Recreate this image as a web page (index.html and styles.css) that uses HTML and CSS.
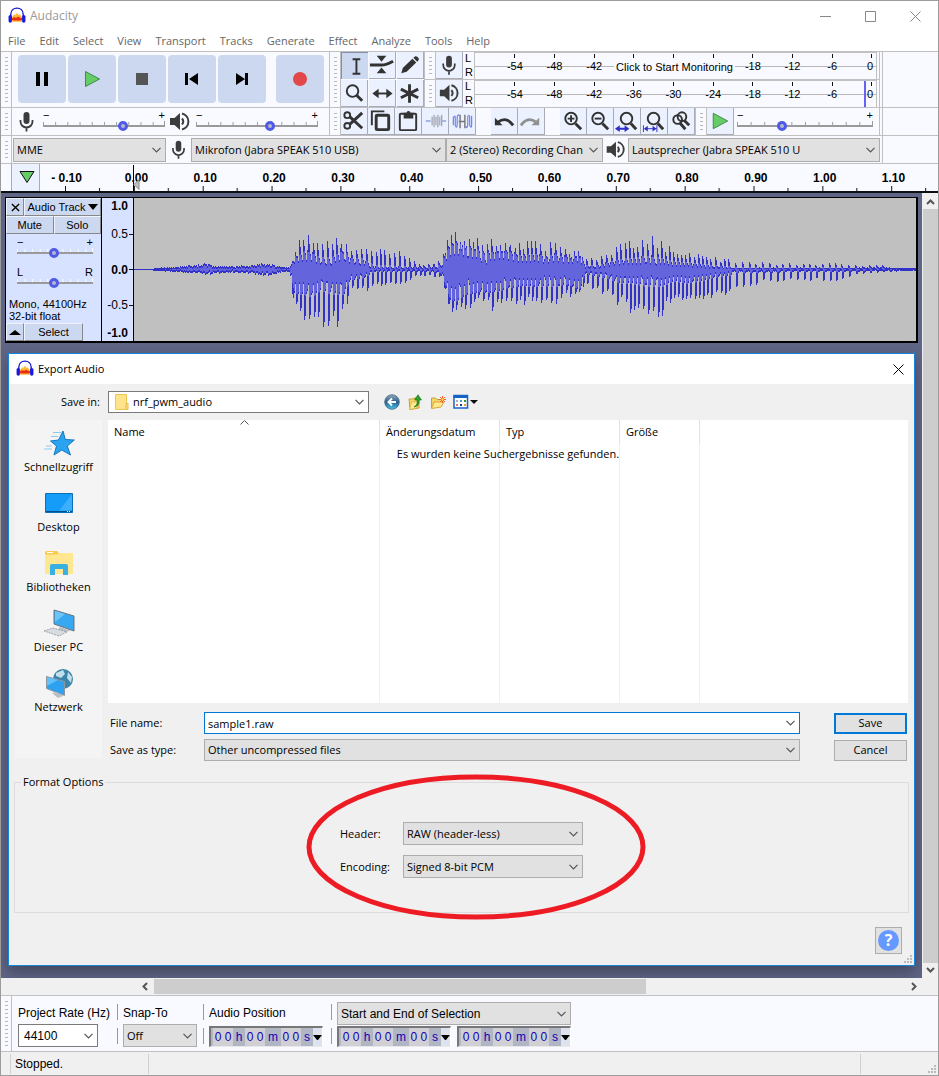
FILE: index.html
```html
<!DOCTYPE html>
<html lang="en">
<head>
<meta charset="utf-8">
<title>Audacity</title>
<link rel="stylesheet" href="styles.css">
</head>
<body>
<svg class="symbols" aria-hidden="true">
  <symbol id="logo" viewBox="0 0 16 16"><path d="M2.500 8.500V6.500C2.500 3 5 1 8 1s5.500 2 5.500 5.500v2" fill="none" stroke="#1414c8" stroke-width="1.200"/><path d="M3.500 9l2-2.500 1 .5 1.500-2 1.500 2 1-.5 2 2.500v4h-9z" fill="#ffb838"/><path d="M3.500 10l2-1 2 .5 1.500-1 1.500 1 2 .5v1.500l-2 .5h-5l-2-.5z" fill="#e83010"/><rect x=".5" y="7" width="3" height="7" rx="1.500" fill="#1818e0"/><rect x="12.500" y="7" width="3" height="7" rx="1.500" fill="#1818e0"/></symbol>
  <symbol id="mic" viewBox="0 0 27 27"><rect x="10.500" y="4" width="6" height="12" rx="3" fill="#3c3c3c"/><path d="M7.500 12v1.500a6 6 0 0 0 12 0V12M13.500 19.500v4" fill="none" stroke="#3c3c3c" stroke-width="1.800"/></symbol>
  <symbol id="speaker" viewBox="0 0 27 27"><path d="M4 10h4.500l5.500-5v17l-5.500-5H4z" fill="#3c3c3c"/><path d="M16 10.500q2.500 3 0 6M16 5.500a8.200 8.200 0 0 1 0 16" fill="none" stroke="#3c3c3c" stroke-width="2"/></symbol>
  <symbol id="play" viewBox="0 0 27 27"><path d="M6.500 5.500v16l15-8z" fill="#66cc66" stroke="#3c8c46"/></symbol>
</svg>
<div class="window">
  <header class="titlebar">
    <svg class="logo"><use href="#logo"/></svg><span>Audacity</span>
    <div class="winbuttons">
      <button aria-label="Minimize"><svg viewBox="0 0 11 11"><path d="M0 5.500h11"/></svg></button>
      <button aria-label="Maximize"><svg viewBox="0 0 11 11"><path d="M.5.5h10v10H.5z"/></svg></button>
      <button aria-label="Close"><svg viewBox="0 0 11 11"><path d="M.5.5l10 10M10.500.5l-10 10"/></svg></button>
    </div>
  </header>
  <nav class="menubar">
    <a href="#">File</a><a href="#">Edit</a><a href="#">Select</a><a href="#">View</a><a href="#">Transport</a><a href="#">Tracks</a><a href="#">Generate</a><a href="#">Effect</a><a href="#">Analyze</a><a href="#">Tools</a><a href="#">Help</a>
  </nav>

  <div class="toolbars">
    <div class="bar">
      <i class="grip"></i>
      <div class="transport">
        <button aria-label="Pause"><svg viewBox="0 0 48 48"><path d="M18 17h4v14h-4zM26 17h4v14h-4z"/></svg></button>
        <button aria-label="Play"><svg viewBox="0 0 48 48"><path d="M17.500 16.500v15l14-7.500z" fill="#66cc66" stroke="#3c8c46"/></svg></button>
        <button aria-label="Stop"><svg viewBox="0 0 48 48"><path d="M18 18h12v12H18z" fill="#555"/></svg></button>
        <button aria-label="Skip to Start"><svg viewBox="0 0 48 48"><path d="M17 18h3v12h-3zM30 18v12l-9-6z"/></svg></button>
        <button aria-label="Skip to End"><svg viewBox="0 0 48 48"><path d="M27 18h3v12h-3zM18 18v12l9-6z"/></svg></button>
        <button class="record" aria-label="Record"><svg viewBox="0 0 48 48"><circle cx="24" cy="24" r="7" fill="#e24848"/></svg></button>
      </div>
      <i class="grip"></i>
      <div class="tools">
        <button class="tool on" aria-label="Selection"><svg viewBox="0 0 27 27"><path class="s" d="M11 6.500h8M11 21.500h8M15 7v14"/></svg></button>
        <button class="tool" aria-label="Envelope"><svg viewBox="0 0 27 27"><path d="M8 4h10l-5 6zM8 22h10l-5-6z"/><path class="t" d="M1 13.500h12q5 0 12-4"/></svg></button>
        <button class="tool" aria-label="Draw"><svg viewBox="0 0 27 27"><path d="M4.500 22l1.500-5.500L16 7l4 4-10 9.500zM17 6l2-1.500q1-.5 2 .5l1.500 1.500q.5 1-.2 2L21 10z"/></svg></button>
        <button class="tool" aria-label="Zoom"><svg viewBox="0 0 27 27"><circle class="s" cx="12" cy="11.500" r="6"/><path class="t" d="M16 15.500l6 6"/></svg></button>
        <button class="tool" aria-label="Time Shift"><svg viewBox="0 0 27 27"><path class="s" d="M7 14h14"/><path d="M3.500 14l6.500-5v10zM24.500 14l-6.500-5v10z"/></svg></button>
        <button class="tool" aria-label="Multi-Tool"><svg viewBox="0 0 27 27"><path class="t" d="M13 4.500v19M4 9.500l18 9M22 9.500L4 18.500"/></svg></button>
      </div>
      <div class="meters">
        <div class="meter">
          <i class="grip"></i><button class="tool" aria-label="Record Meter"><svg><use href="#mic"/></svg></button>
          <div class="channels"><span>L</span><span>R</span></div>
          <div class="scale"><span>-54</span><span>-48</span><span>-42</span><span></span><span></span><span></span><span>-18</span><span>-12</span><span>-6</span><span class="zero">0</span><button class="monitor">Click to Start Monitoring</button></div>
        </div>
        <div class="meter">
          <i class="grip"></i><button class="tool" aria-label="Playback Meter"><svg><use href="#speaker"/></svg></button>
          <div class="channels"><span>L</span><span>R</span></div>
          <div class="scale"><span>-54</span><span>-48</span><span>-42</span><span>-36</span><span>-30</span><span>-24</span><span>-18</span><span>-12</span><span>-6</span><span class="zero">0</span><i class="peak"></i></div>
        </div>
      </div>
    </div>

    <div class="bar">
      <i class="grip"></i>
      <div class="mixer">
        <svg class="glyph"><use href="#mic"/></svg>
        <label class="slider"><span>−</span><span>+</span><input type="range" aria-label="Recording Volume" value="67"></label>
        <svg class="glyph"><use href="#speaker"/></svg>
        <label class="slider"><span>−</span><span>+</span><input type="range" aria-label="Playback Volume" value="62"></label>
      </div>
      <i class="grip"></i>
      <div class="edit">
        <div class="group">
          <button class="tool" aria-label="Cut"><svg viewBox="0 0 27 27"><circle class="s" cx="6.500" cy="7.500" r="3"/><circle class="s" cx="6.500" cy="18.500" r="3"/><path class="t" d="M9 9l13 12M9 17L22 5"/></svg></button>
          <button class="tool" aria-label="Copy"><svg viewBox="0 0 27 27"><path class="s" d="M4 18V3.500h13"/><rect class="t" x="8.500" y="7.500" width="13" height="15" rx="1"/></svg></button>
          <button class="tool" aria-label="Paste"><svg viewBox="0 0 27 27"><rect class="s" x="5" y="6" width="17" height="17" rx="1"/><path d="M9 5h3a2 2 0 0 1 4 0h3v6H9z"/></svg></button>
          <button class="tool" aria-label="Trim"><svg viewBox="0 0 27 27"><path d="M4 13.500h5M21 13.500h4" stroke="#a9b4e8" stroke-width="2"/><path d="M10.500 9v9M12.500 7v13M14.500 9v9M16.500 7v13M18.500 9v9M20.500 7v12" stroke="#9c9ca8" stroke-width="1.200"/></svg></button>
          <button class="tool" aria-label="Silence"><svg viewBox="0 0 27 27"><path d="M4.500 18V10q2-3 2 0v8q1.500 4 2 0V9q1-3 2-1M17.500 19q1 3 2-1V9q1-3 2 0v9q2 4 2 0V8" fill="none" stroke="#7080e8" stroke-width="1.200"/><path d="M10 14h7M11.500 7v14M16.500 7v14" stroke="#777" stroke-width="1.500"/></svg></button>
        </div>
        <div class="group">
          <button class="tool" aria-label="Undo"><svg viewBox="0 0 27 27"><path class="t" d="M7 15q9-7 16 3"/><path d="M4 10v8h8z"/></svg></button>
          <button class="tool off" aria-label="Redo"><svg viewBox="0 0 27 27"><path class="t" d="M19 15q-9-7-16 3"/><path d="M22 10v8h-8z"/></svg></button>
        </div>
        <div class="group">
          <button class="tool" aria-label="Zoom In"><svg viewBox="0 0 27 27"><circle class="s" cx="11.500" cy="11" r="6"/><path class="s" d="M8 11h7M11.500 7.500v7"/><path class="t" d="M16 16l6 6"/></svg></button>
          <button class="tool" aria-label="Zoom Out"><svg viewBox="0 0 27 27"><circle class="s" cx="11.500" cy="11" r="6"/><path class="s" d="M8 11h7"/><path class="t" d="M16 16l6 6"/></svg></button>
          <button class="tool" aria-label="Fit Selection"><svg viewBox="0 0 27 27"><circle class="s" cx="13" cy="11" r="6"/><path class="t" d="M17.500 16l5.500 6"/><path d="M1 21.500l5-3.500v2.500h5V18l5 3.500-5 3.500v-2.500H6V25z" fill="#3030c8"/></svg></button>
          <button class="tool" aria-label="Fit Project"><svg viewBox="0 0 27 27"><circle class="s" cx="13" cy="11" r="6"/><path class="t" d="M17.500 16l5.500 6"/><path d="M2.500 18v7M16.500 18v7M4 21.500h12" stroke="#3030c8"/><path d="M3 21.500l4-3v6zM16 21.500l-4-3v6z" fill="#3030c8"/></svg></button>
          <button class="tool" aria-label="Zoom Toggle"><svg viewBox="0 0 27 27"><circle class="s" cx="10" cy="12" r="4.500"/><circle class="s" cx="14.500" cy="9" r="4.500"/><path class="t" d="M12 15l6 7M17 13l5 5"/></svg></button>
        </div>
      </div>
      <i class="grip"></i>
      <div class="speed">
        <button class="tool" aria-label="Play at Speed"><svg><use href="#play"/></svg></button>
        <label class="slider"><span>−</span><span>+</span><input type="range" aria-label="Playback Speed" value="32"></label>
      </div>
    </div>

    <div class="bar devices">
      <i class="grip"></i>
      <select class="host" aria-label="Audio Host"><option>MME</option></select>
      <svg class="glyph"><use href="#mic"/></svg>
      <select class="input" aria-label="Recording Device"><option>Mikrofon (Jabra SPEAK 510 USB)</option></select>
      <select class="chans" aria-label="Recording Channels"><option>2 (Stereo) Recording Channels</option></select>
      <svg class="glyph"><use href="#speaker"/></svg>
      <select class="output" aria-label="Playback Device"><option>Lautsprecher (Jabra SPEAK 510 U</option></select>
    </div>

    <div class="timeline">
      <button class="pin" aria-label="Pin Play Head"><svg viewBox="0 0 26 26"><path d="M6 6.500h14l-7 11z" fill="#66cc66" stroke="#111"/></svg></button>
      <div class="ruler">
        <span class="neg">- 0.10</span><span>0.00</span><span>0.10</span><span>0.20</span><span>0.30</span><span>0.40</span><span>0.50</span><span>0.60</span><span>0.70</span><span>0.80</span><span>0.90</span><span>1.00</span><span>1.10</span>
        <svg class="ticks" aria-hidden="true"><defs><pattern id="tk" x="25" y="0" width="68.850" height="27" patternUnits="userSpaceOnUse"><path d="M.5 22v5M34.500 24v3" stroke="#111"/></pattern></defs><rect width="100%" height="27" fill="url(#tk)"/><path d="M93.500 1v26" stroke="#000"/><path d="M94 20.500l5-5v10z" fill="#c0c0c0" stroke="#888"/></svg>
      </div>
    </div>
  </div>

  <main class="workspace">
    <div class="canvas">
      <section class="track">
        <div class="panel">
          <div class="row"><button class="close" aria-label="Close Track"><svg viewBox="0 0 10 10"><path d="M1 1l8 8M9 1L1 9" stroke="#000" stroke-width="1.500"/></svg></button><button class="grow name">Audio Track<i class="down"></i></button></div>
          <div class="row"><button class="grow">Mute</button><button class="grow">Solo</button></div>
          <label class="slider"><span>−</span><span>+</span><input type="range" aria-label="Gain" value="48"></label>
          <label class="slider pan"><span>L</span><span>R</span><input type="range" aria-label="Pan" value="48"></label>
          <p>Mono, 44100Hz<br>32-bit float</p>
          <div class="row"><button class="close" aria-label="Collapse"><i class="up"></i></button><button class="select">Select</button></div>
        </div>
        <div class="vruler"><b>1.0</b><span>0.5</span><b class="axis">0.0</b><span>-0.5</span><b>-1.0</b></div>
        <svg class="wave" id="wave" viewBox="0 0 782 143" preserveAspectRatio="none" role="img" aria-label="Waveform"></svg>
      </section>

      <section class="dialog" role="dialog" aria-labelledby="dlg-title">
        <header class="dlg-title"><svg class="logo"><use href="#logo"/></svg><span id="dlg-title">Export Audio</span><button aria-label="Close dialog"><svg viewBox="0 0 11 11"><path d="M.5.5l10 10M10.500.5l-10 10" stroke="#000"/></svg></button></header>
        <div class="savein">
          <label for="folder">Save in:</label>
          <div class="folder">
            <select id="folder"><option>nrf_pwm_audio</option></select>
            <svg viewBox="0 0 14 16"><path d="M.5.5h11v15H.5z" fill="#ffe48c" stroke="#eec550"/><path d="M11 9.500h2v6h-2z" fill="#ffe48c" stroke="#e8bc48"/></svg>
          </div>
          <div class="navicons">
            <button aria-label="Back"><svg viewBox="0 0 16 16"><defs><linearGradient id="bk" x2="0" y2="1"><stop stop-color="#9ab"/><stop offset=".5" stop-color="#235f92"/><stop offset="1" stop-color="#48c8e8"/></linearGradient></defs><circle cx="8" cy="8" r="7.300" fill="url(#bk)" stroke="#48637c" stroke-width=".8"/><path d="M12 8H5M8 4.500L4.500 8 8 11.500" fill="none" stroke="#fff" stroke-width="2"/></svg></button>
            <button aria-label="Up One Level"><svg viewBox="0 0 16 16"><path d="M2 5h4l1-1h5v10l-9 1.500z" fill="#f4d468" stroke="#c9a030"/><path d="M2.500 15.500L4.500 8h7L10 14z" fill="#ffe890" stroke="#d4aa38" stroke-width=".6"/><path d="M7 13q4-2 3-7H7.500L11 .8 14.500 6H12q1 6-5 7z" fill="#2ca02c" stroke="#14701c" stroke-width=".6"/></svg></button>
            <button aria-label="New Folder"><svg viewBox="0 0 16 16"><path d="M1.500 14V4h4l1.500 1.500h5V9" fill="#f4d468" stroke="#c9a030"/><path d="M1.500 14.500L4 8h10l-3 5z" fill="#ffe890" stroke="#d4aa38"/><path d="M12.500 2v7M9 5.500h7M10 3l5 5M15 3l-5 5" stroke="#f06030"/><circle cx="12.500" cy="5.500" r="1.200" fill="#ffe040"/></svg></button>
            <button class="view" aria-label="View Menu"><svg viewBox="0 0 26 16"><path d="M1 1.500h13.500v12.500H1z" fill="#fff" stroke="#1464c8" stroke-width="1.500"/><path d="M.5 1h14.500v3H.5z" fill="#1464c8"/><path d="M3 6h2v2H3z" fill="#aac"/><path d="M7 6h2v2H7z" fill="#48a0d8"/><path d="M11 6h2v2h-2z" fill="#309040"/><path d="M3 10h2v2H3z" fill="#f07850"/><path d="M7 10h2v2H7z" fill="#203880"/><path d="M11 10h2v2h-2z" fill="#e0a820"/><path d="M17 6h8l-4 4z" fill="#111"/></svg></button>
          </div>
        </div>

        <div class="browse">
          <nav class="places">
            <a href="#"><svg viewBox="0 0 32 32"><path d="M20 4l2.300 8.500 9 .5-7 6 3.200 9-8.700-5-7.800 5 2.500-9-6-5 8-1z" fill="#2aa4f0" stroke="#1478c0"/><path d="M10 5.500h8M8 9.500h7M3 19h6M1 22h8" stroke="#90c8ec"/></svg>Schnellzugriff</a>
            <a href="#"><svg viewBox="0 0 32 32"><path d="M2.500 6.500h27v19h-27z" fill="#149cf8" stroke="#0a70b8"/><path d="M29 7v16L16 24z" fill="#3cb0fc"/><path d="M3 24.500h26" stroke="#08508c"/><path d="M24 24.500h4" stroke="#fff" stroke-dasharray="1"/></svg>Desktop</a>
            <a href="#"><svg viewBox="0 0 32 32"><path d="M2 6q0-2 2-2h10l2 2h13q1 0 1 1v19q0 1-1 1H3q-1 0-1-1z" fill="#ffe691"/><path d="M2 6q0-2 2-2h10l1.500 2-1 1.500H2z" fill="#f8cc48"/><path d="M4 5.500h6" stroke="#fff"/><path d="M7 28V19q0-2 2-2h14q2 0 2 2v9h-5v-6h-8v6z" fill="#38b0e4"/></svg>Bibliotheken</a>
            <a href="#"><svg viewBox="0 0 32 32"><path d="M11 3l20 6v15l-20-7z" fill="#38a8f0" stroke="#68747c"/><path d="M12 4l10 3-10 8z" fill="#6cc4f8"/><path d="M17 20l7 2.500 4 1-7 2-6-3z" fill="#b8bec4"/><path d="M1 24l9-3 14 4-8 4z" fill="#d8dce0" stroke="#9ca4ac" stroke-dasharray="2 1"/></svg>Dieser PC</a>
            <a href="#"><svg viewBox="0 0 32 32"><circle cx="20" cy="12" r="10" fill="#3c84a8"/><path d="M13 6l7-3 2 4-4 4-5-2zM25 5l4 5-1 6-4-5z" fill="#bfe0ec"/><path d="M3.500 9.500l18 5v14l-18-7z" fill="#2ea2ee" stroke="#8c98a0"/><path d="M4 10l11 3-11 6z" fill="#64c0f8"/><path d="M9 26l5-1 6 4-5 2z" fill="#b8bec4"/></svg>Netzwerk</a>
          </nav>
          <div class="content">
            <div class="files">
              <table>
                <colgroup><col class="c-name"><col class="c-date"><col class="c-type"><col class="c-size"><col></colgroup>
                <thead><tr><th>Name<svg class="sort" viewBox="0 0 9 5"><path d="M.5 4.500l4-4 4 4" fill="none" stroke="#555"/></svg></th><th>Änderungsdatum</th><th>Typ</th><th>Größe</th><th></th></tr></thead>
                <tbody><tr><td></td><td></td><td></td><td></td><td></td></tr></tbody>
              </table>
              <p>Es wurden keine Suchergebnisse gefunden.</p>
            </div>
            <form class="fields">
              <label for="fname">File name:</label><input id="fname" class="combo" value="sample1.raw"><button class="btn default" type="button">Save</button>
              <label for="ftype">Save as type:</label><select id="ftype"><option>Other uncompressed files</option></select><button class="btn" type="button">Cancel</button>
            </form>
          </div>
        </div>

        <fieldset class="options">
          <legend>Format Options</legend>
          <div class="optgrid">
            <label for="hdr">Header:</label><select id="hdr"><option>RAW (header-less)</option></select>
            <label for="enc">Encoding:</label><select id="enc"><option>Signed 8-bit PCM</option></select>
          </div>
          <svg class="marker" viewBox="0 0 340 146" aria-hidden="true"><ellipse cx="170" cy="73" rx="167" ry="70" fill="none" stroke="#ed1c24" stroke-width="5"/></svg>
        </fieldset>
        <footer class="dlg-foot"><button class="help" aria-label="Help"><span>?</span></button></footer>
        <svg class="sizer" viewBox="0 0 9 9"><path d="M6 0h2v2H6zM3 3h2v2H3zM6 3h2v2H6zM0 6h2v2H0zM3 6h2v2H3zM6 6h2v2H6z" fill="#bbb"/></svg>
      </section>
    </div>
    <div class="vscroll"><svg viewBox="0 0 9 6"><path d="M1 5l3.500-3.500L8 5"/></svg><i></i><svg viewBox="0 0 9 6"><path d="M1 1l3.500 3.500L8 1"/></svg></div>
  </main>
  <div class="hscroll"><svg viewBox="0 0 6 9"><path d="M5 1L1.500 4.500 5 8"/></svg><div><i></i></div><svg viewBox="0 0 6 9"><path d="M1 1l3.500 3.500L1 8"/></svg></div>

  <div class="selectionbar">
    <i class="grip"></i>
    <div class="cell rate"><label for="rate">Project Rate (Hz)</label><input id="rate" class="combo" value="44100"></div>
    <div class="cell snap"><label for="snap">Snap-To</label><select id="snap"><option>Off</option></select></div>
    <div class="cell pos"><span class="cap">Audio Position</span>
      <div class="time"><b>0</b><b>0</b><u>h</u><b>0</b><b>0</b><u class="m">m</u><b>0</b><b>0</b><u>s</u><button aria-label="Position format"><i class="down"></i></button></div>
    </div>
    <div class="cell range"><select aria-label="Selection mode"><option>Start and End of Selection</option></select>
      <div class="pair">
        <div class="time"><b>0</b><b>0</b><u>h</u><b>0</b><b>0</b><u class="m">m</u><b>0</b><b>0</b><u>s</u><button aria-label="Start format"><i class="down"></i></button></div>
        <div class="time"><b>0</b><b>0</b><u>h</u><b>0</b><b>0</b><u class="m">m</u><b>0</b><b>0</b><u>s</u><button aria-label="End format"><i class="down"></i></button></div>
      </div>
    </div>
  </div>
  <footer class="status"><span class="state">Stopped.</span><span class="msg"></span><span class="end"><svg class="sizer" viewBox="0 0 9 9"><path d="M6 0h2v2H6zM3 3h2v2H3zM6 3h2v2H6zM0 6h2v2H0zM3 6h2v2H3zM6 6h2v2H6z" fill="#bbb"/></svg></span></footer>
</div>
<script src="wave.js"></script>
</body>
</html>
```

FILE: styles.css
```css
* { box-sizing: border-box; }
:root {
  --ui: "Open Sans", "Noto Sans", sans-serif;
  --arial: "Liberation Sans", Arial, sans-serif;
  --bar: #f8faff;
  --line: #c0c0c0;
  --track: #d6e2ff;
  --key: #ccd8f0;
  --chevron: url("data:image/svg+xml,%3Csvg xmlns='http://www.w3.org/2000/svg' width='9' height='6'%3E%3Cpath d='M.5.8l4 4 4-4' fill='none' stroke='%23555' stroke-width='1.200'/%3E%3C/svg%3E");
}
body { margin: 0; font: 11px/16px var(--ui); color: #000; }
button, input, select { font: inherit; color: inherit; margin: 0; }
button { padding: 0; border: 0; background: none; }
a { color: inherit; text-decoration: none; }
p { margin: 0; }
svg { display: block; flex: none; }
.symbols { position: absolute; width: 0; height: 0; }
.logo { width: 18px; height: 18px; }

select, .combo {
  appearance: none; border: 1px solid #adadad; border-radius: 0; height: 22px; min-width: 0;
  padding: 0 19px 0 3px; background: #e1e1e1 var(--chevron) no-repeat right 4px center;
  outline: 0; overflow: hidden;
}
.combo { background-color: #fff; }

/* Main window frame */
.window { min-height: 100vh; display: flex; flex-direction: column; border: 1px solid #9c9c9c; background: #f0f0f0; }
.titlebar { display: flex; align-items: center; height: 30px; padding-left: 7px; gap: 4px; background: #fff; color: #999; font-size: 12px; }
.winbuttons { margin-left: auto; display: flex; }
.winbuttons button { width: 45px; height: 30px; display: grid; place-items: center; }
.winbuttons svg { width: 11px; height: 11px; fill: none; stroke: #888; }
.menubar { display: flex; gap: 14px; height: 20px; padding: 2px 7px 0; background: #fff; color: #666; }

/* Toolbars */
.toolbars { background: var(--bar); border-bottom: 2px solid #0a1014; }
.bar { display: flex; border-top: 1px solid var(--line); }
.bar::after { content: ""; flex: none; width: 55px; border-left: 1px solid var(--line); margin-left: 2px; }
.grip { flex: none; width: 11px; border-right: 1px solid var(--line); padding: 5px 3px 4px 4px;
  background: repeating-linear-gradient(#b8b8b8 0 1px, transparent 1px 4px) content-box; }
.transport { flex: none; width: 318px; display: flex; gap: 2px; padding: 3px 5px 4px 6px; border-right: 1px solid var(--line); }
.transport button { width: 48px; height: 48px; border-radius: 4px; background: var(--key); }
.transport .record { margin-left: 8px; }
.tools { flex: none; display: grid; grid-template-columns: repeat(3, 27px); gap: 1px; border-right: 1px solid var(--line); }
.tool { flex: none; width: 27px; height: 27px; background: #ebf1ff; border: solid #a8acb8; border-width: 0 1px 1px 0; }
.tool.on { background: var(--key); border: solid #848ea8; border-width: 1px 0 0 1px; }
.tool svg { width: 26px; height: 26px; fill: #333; }
.tool .s { fill: none; stroke: #333; stroke-width: 2; }
.tool .t { fill: none; stroke: #333; stroke-width: 3; }
.tool.off svg { fill: #909090; }
.tool.off .t { stroke: #909090; }

.meters { flex: 1; display: grid; row-gap: 1px; background: var(--line); border-right: 1px solid var(--line); }
.meter { display: flex; background: var(--bar); padding-right: 2px; height: 27px; }
.channels { width: 12px; flex: none; font: 11px/13px var(--arial); display: grid; padding-left: 2px; border-right: 1px solid var(--line); }
.scale { flex: 1; position: relative; display: flex; padding-left: 20px; font: 11px/26px var(--arial); border: solid var(--line); border-width: 1px 1px 0 0;
  background: linear-gradient(#b8b8b8, #b8b8b8) no-repeat 0 13px / 100% 1px; }
.scale span { flex: 1; text-align: center; background: linear-gradient(#111, #111) no-repeat 50% 1px / 1px 4px; }
.scale .zero { flex: none; width: 24px; text-align: right; padding-right: 3px; background-position: 19px 1px; }
.monitor { position: absolute; left: 139px; top: 5px; width: 121px; height: 18px; line-height: 18px; background: var(--bar); }
.peak { position: absolute; right: 10px; top: 0; width: 2px; height: 26px; background: #6464f0; }

.mixer { flex: none; width: 318px; display: flex; padding: 0 10px 0 1px; border-right: 1px solid var(--line); }
.glyph { width: 27px; height: 27px; }
.slider { flex: 1; display: grid; grid-template-columns: auto 1fr; align-content: start; font: 11px/12px var(--arial); padding: 1px 1px 0 3px; }
.slider input {
  grid-column: 1 / 3; appearance: none; width: 100%; height: 10px; outline: 0;
  background: linear-gradient(#9a9a9a, #9a9a9a) no-repeat 0 4px / 100% 2px,
    linear-gradient(90deg, #9a9a9a 1px, transparent 1px) repeat-x 0 1px / 10% 4px,
    linear-gradient(#9a9a9a, #9a9a9a) no-repeat 100% 0 / 1px 5px;
}
.slider span:nth-child(2) { text-align: right; }
.slider input::-webkit-slider-thumb { appearance: none; width: 10px; height: 10px; border-radius: 50%; border: 3px solid #505ae8; background: #b8b8c8; }
.edit { display: flex; gap: 15px; flex: none; border-right: 1px solid var(--line); }
.group { display: flex; }
.speed { flex: 1; display: flex; padding-right: 5px; border-right: 1px solid var(--line); }

.devices { height: 28px; align-items: center; }
.devices .grip, .devices::after { align-self: stretch; }
.devices select { height: 24px; flex: none; }
.devices .host { width: 153px; margin-left: 1px; }
.devices .input { width: 255px; }
.devices .chans { width: 157px; }
.devices .output { flex: 1; }
.devices .glyph { width: 25px; }

.timeline { display: flex; border-top: 1px solid var(--line); height: 28px; padding-left: 10px; }
.pin { flex: none; width: 29px; border: solid #a8acb8; border-width: 0 1px; background: #ebf1ff; padding-left: 2px; }
.pin svg { width: 26px; height: 26px; }
.ruler { flex: 1; position: relative; display: flex; padding-right: 10px; font: bold 12px/28px var(--arial); }
.ruler span { flex: 1; text-align: center; }
.ruler .neg { flex: none; width: 62px; padding-right: 9px; }
.ticks { position: absolute; left: 0; top: 0; width: 100%; height: 27px; }

/* Track area */
.workspace { flex: 1; display: flex; min-height: 784px; }
.canvas { flex: 1; min-width: 0; position: relative; padding: 4px 4px 0; background: #5f6585; overflow: hidden; }
.track { display: flex; height: 146px; border: 1px solid #000; border-width: 1px 2px 2px 1px; background: #000; }
.panel { width: 95px; flex: none; display: flex; flex-direction: column; background: var(--track); font: 11px/17px var(--arial); }
.row { display: flex; }
.row button { height: 18px; background: var(--key); border: 1px solid; border-color: #f0f4ff #888 #888 #f0f4ff; display: flex; align-items: center; justify-content: center; }
.row .close { width: 18px; }
.close svg { width: 9px; height: 9px; }
.row .grow { flex: 1; }
.name { gap: 2px; white-space: nowrap; }
.row .select { width: 59px; }
.down, .up { border: 5px solid transparent; border-top: 6px solid #000; border-bottom: 0; }
.up { border-top: 0; border-bottom: 5px solid #000; border-left-width: 6px; border-right-width: 6px; }
.panel .slider { flex: none; margin: 1px 7px 0 8px; }
.panel .slider input { background-image: linear-gradient(#9a9a9a, #9a9a9a), linear-gradient(90deg, #fff 1px, transparent 1px), linear-gradient(#fff, #fff); }
.panel .pan { margin-top: 7px; }
.panel p { font: 11px/12px var(--arial); padding-left: 3px; margin: 10px 0 auto; }
.vruler { width: 31px; flex: none; margin: 0 1px; padding-right: 5px; display: flex; flex-direction: column; justify-content: space-between; text-align: right; font: 12px/16px var(--arial);
  background: linear-gradient(#111, #111) no-repeat right 36px / 4px 1px, linear-gradient(#111, #111) no-repeat right 71px / 4px 1px, linear-gradient(#111, #111) no-repeat right 107px / 4px 1px, var(--track); }
.vruler .axis { margin: 8px 0; }
.wave { flex: 1; width: 0; height: 143px; background: #c0c0c0; }

.vscroll { width: 16px; flex: none; display: flex; flex-direction: column; align-items: center; gap: 4px; padding: 6px 0 5px; }
.vscroll i { flex: 1; width: 15px; background: #cdcdcd; }
.vscroll svg, .hscroll svg { fill: none; stroke: #555; stroke-width: 2; }
.vscroll svg { width: 9px; height: 6px; }
.hscroll { display: flex; align-items: center; gap: 6px; height: 17px; padding: 0 21px 0 141px; }
.hscroll div { flex: 1; }
.hscroll i { display: block; width: 65.500%; height: 15px; background: #cdcdcd; }
.hscroll svg { width: 6px; height: 9px; }

/* Export dialog */
.dialog { position: absolute; left: 7px; right: 7px; top: 160px; background: #f0f0f0; border: 1px solid #1883d7; box-shadow: 0 6px 14px rgba(0, 0, 0, .3); }
.dlg-title { display: flex; align-items: center; gap: 4px; height: 30px; padding: 0 10px 0 7px; background: #fff; }
.dlg-title button { margin-left: auto; }
.dlg-title button svg { width: 11px; height: 11px; }
.savein { display: flex; align-items: center; padding: 7px 6px; }
.savein > label { width: 93px; padding-right: 8px; text-align: right; }
.folder { position: relative; width: 261px; }
.folder select { width: 100%; display: block; padding-left: 24px; background-color: #fff; border-color: #7a7a7a; }
.folder svg { position: absolute; left: 7px; top: 3px; width: 14px; height: 16px; }
.navicons { display: flex; gap: 7px; margin-left: 15px; }
.navicons svg { width: 16px; height: 16px; }
.navicons .view svg { width: 26px; }
.browse { display: grid; grid-template-columns: 87px 1fr; column-gap: 6px; padding: 0 6px; align-items: start; }
.places { height: 338px; background: #f4f4f4; padding-top: 7px; display: flex; flex-direction: column; gap: 12px; }
.places a { display: flex; flex-direction: column; align-items: center; }
.places svg { width: 32px; height: 32px; }
.files { position: relative; height: 283px; background: #fff; }
.files table { width: 100%; height: 100%; border-collapse: separate; border-spacing: 0; table-layout: fixed; }
.files th { height: 24px; padding: 0 6px; text-align: left; font-weight: normal; border-right: 1px solid #e2e2e2; position: relative; }
.files td { border-right: 1px solid #eaf2f8; }
.files th:last-child, .files td:last-child { border: 0; }
.c-name { width: 272px; }
.c-date, .c-type { width: 120px; }
.c-size { width: 80px; }
.sort { position: absolute; left: 132px; top: 0; width: 9px; height: 5px; }
.files p { position: absolute; left: 0; right: 0; top: 26px; text-align: center; }
.fields { display: grid; grid-template-columns: 96px 1fr 108px; align-items: center; row-gap: 5px; margin-top: 9px; }
.fields label { padding-left: 2px; }
.fields .combo { border-color: #0078d7; }
.btn { width: 73px; height: 21px; justify-self: end; margin-right: 1px; background: #e1e1e1; border: 1px solid #adadad; }
.btn.default { border: 2px solid #0078d7; }
.options { position: relative; margin: 13px 5px 0; padding: 32px 0 34px; border: 1px solid #dcdcdc; min-width: 0; }
.options legend { margin-left: 6px; padding: 0 2px; }
.optgrid { display: grid; grid-template-columns: 63px 180px; row-gap: 10px; justify-content: center; align-items: center; }
.optgrid select { height: 23px; }
.marker { position: absolute; left: calc(50% - 156px); top: -16px; width: 340px; height: 146px; }
.dlg-foot { display: flex; justify-content: flex-end; padding: 14px 12px 11px; }
.help { width: 27px; height: 27px; display: grid; place-items: center; background: #e1e1e1; border: 1px solid #adadad; }
.help span { width: 21px; height: 21px; border-radius: 50%; background: #6699ff; color: #fff; font: bold 16px/21px var(--ui); }
.sizer { width: 9px; height: 9px; }
.dialog > .sizer { position: absolute; right: 1px; bottom: 1px; }

/* Selection toolbar and status bar */
.selectionbar { display: flex; height: 57px; background: var(--bar); border: solid var(--line); border-width: 1px 0; font: 12px/16px var(--arial); }
.cell { display: flex; flex-direction: column; gap: 4px; padding: 6px 6px 3px; }
.cell > label, .cell > .cap { height: 18px; padding-top: 3px; white-space: nowrap; }
.cell + .cell { background: linear-gradient(#999, #999) no-repeat 0 8px / 1px 16px, linear-gradient(#999, #999) no-repeat 0 32px / 1px 16px; }
.cell select, .cell .combo { height: 23px; }
.rate { width: 105px; }
.rate .combo { width: 80px; border-color: #7a7a7a; padding-left: 5px; }
.snap { width: 86px; }
.snap select { font-family: var(--ui); font-size: 11px; }
.pos { width: 128px; gap: 6px; }
.range { gap: 1px; width: 246px; }
.pair { display: flex; gap: 6px; }
.time { display: flex; width: 114px; height: 21px; padding-left: 2px; border: solid #777; border-width: 2px 0 0 2px; border-right: 1px solid #fff; border-bottom: 1px solid #e8e8e8; background: #b0b6c4; color: #1400b4; font-size: 12px; line-height: 18px; }
.time b { width: 10px; text-align: center; background: #cfcfd4; font-weight: normal; }
.time u { flex: 13; text-align: center; text-decoration: none; }
.time .m { flex: 17; }
.time button { width: 9px; background: #dde2ee; }
.time .down { display: block; border-width: 5px 4px 0; }
.status { display: flex; height: 23px; padding: 2px 0 1px 9px; font: 12px/21px var(--arial); }
.status span { border-left: 1px solid #d0d0d0; }
.state { width: 138px; padding-left: 4px; }
.msg { flex: 1; }
.end { width: 78px; position: relative; }
.end .sizer { position: absolute; right: 1px; bottom: 0; }
```

FILE: wave.js
```js
// Envelope key points: x, peak above the axis, peak below, body thickness (0..1).
const env = [
  [0,0,0,1],[15,0,0,1],[20,1,1,1],[40,2,2,1],[66,5,4,.8],[71,7,6,.8],[80,4,4,.8],[100,3,3,.8],[116,4,4,.8],
  [124,6,6,.9],[136,6,6,.9],[146,3,3,.9],[155,2,2,.9],[157,6,21,.4],[160,24,46,.5],[166,30,54,.45],[170,40,60,.4],
  [178,36,64,.4],[186,30,56,.35],[196,29,64,.35],[206,38,60,.4],[210,34,48,.5],[216,20,20,.5],[228,25,23,.4],
  [240,24,20,.1],[252,22,16,.1],[262,20,19,.1],[272,17,16,.1],[276,10,10,.15],[286,5,6,.3],[298,5,8,.3],
  [306,10,10,.4],[311,26,26,.6],[316,36,46,.65],[322,40,49,.65],[330,36,40,.65],[346,30,36,.6],[352,28,42,.55],
  [364,35,43,.5],[372,32,34,.55],[386,28,36,.45],[400,29,33,.5],[412,26,36,.45],[421,33,41,.4],[430,22,29,.5],
  [446,19,28,.7],[451,11,14,.3],[463,14,24,.25],[476,19,28,.35],[486,26,38,.35],[498,32,44,.3],[510,37,50,.3],
  [518,35,50,.3],[528,28,46,.35],[540,22,36,.3],[553,18,38,.35],[566,15,36,.3],[582,12,28,.25],[596,10,26,.2],
  [600,8,20,.15],[614,7,18,.15],[630,7,13,.2],[660,6,12,.2],[701,6,12,.2],[720,4,6,.3],[742,5,3,.4],[760,2,2,.5],[782,1,1,1]
];
let seed = 7;
const rnd = () => (seed = (seed * 16807) % 2147483647) / 2147483647;
const at = (x, k) => {
  let i = 1;
  while (i < env.length - 1 && env[i][0] < x) i++;
  const a = env[i - 1], b = env[i], t = (x - a[0]) / (b[0] - a[0]);
  return a[k] + (b[k] - a[k]) * t;
};
const mid = 71;
let peaks = "", body = "", next = 0, from = 0, high = 1, deep = 1;
for (let x = 0; x < 782; x++) {
  if (x >= next) {
    from = x;
    next = x + (x > 590 ? 6 : 4) + Math.round(rnd());
    high = .65 + rnd() * .35;
    deep = .7 + rnd() * .3;
  }
  const k = x - from, solid = at(x, 3), up = at(x, 1), dn = at(x, 2);
  const top = [high, high * .75, solid, solid * .6, solid * (.4 + rnd()), solid, solid * .6][k];
  const low = [solid * .6, deep, deep * .9, solid, solid * (.4 + rnd() * .6), solid * .6, solid * .4][k];
  const t = Math.round(up * top), b = Math.round(dn * low) + 1;
  peaks += `M${x} ${mid - t}h1v${t + b}h-1z`;
  const rt = Math.max(0, Math.round(Math.min(t - 2, up * (solid * .9 + .08))));
  const rb = Math.max(0, Math.round(Math.min(b - 2, dn * (solid * .9 + .08))));
  if (rt + rb > 0) body += `M${x} ${mid - rt}h1v${rt + rb}h-1z`;
}
document.getElementById("wave").innerHTML =
  `<g shape-rendering="crispEdges"><path d="M0 71h782v1H0z"/><path d="${peaks}" fill="#3232c8"/><path d="${body}" fill="#6464dc"/></g>`;
```
